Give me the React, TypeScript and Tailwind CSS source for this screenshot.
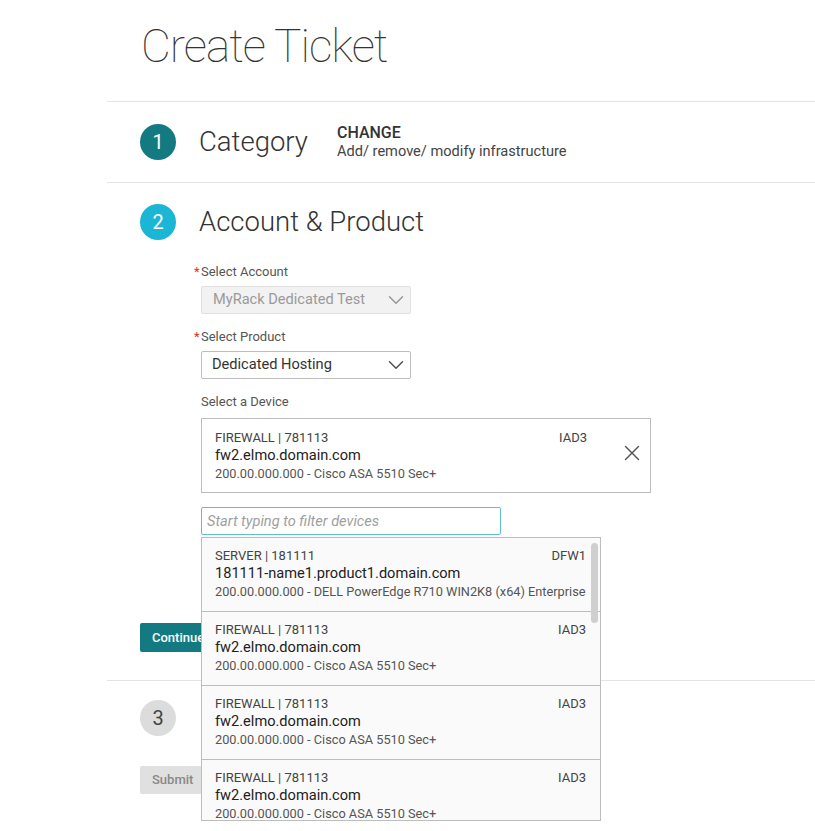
import { ChevronDown, X } from 'lucide-react'

interface Device {
  type: string
  id: string
  dc: string
  name: string
  detail: string
}

const devices: Device[] = [
  {
    type: 'SERVER',
    id: '181111',
    dc: 'DFW1',
    name: '181111-name1.product1.domain.com',
    detail: '200.00.000.000 - DELL PowerEdge R710 WIN2K8 (x64) Enterprise',
  },
  { type: 'FIREWALL', id: '781113', dc: 'IAD3', name: 'fw2.elmo.domain.com', detail: '200.00.000.000 - Cisco ASA 5510 Sec+' },
  { type: 'FIREWALL', id: '781113', dc: 'IAD3', name: 'fw2.elmo.domain.com', detail: '200.00.000.000 - Cisco ASA 5510 Sec+' },
  { type: 'FIREWALL', id: '781113', dc: 'IAD3', name: 'fw2.elmo.domain.com', detail: '200.00.000.000 - Cisco ASA 5510 Sec+' },
]

function DeviceInfo({ device }: { device: Device }) {
  return (
    <div>
      <div className="flex justify-between text-[13px] leading-4 text-[#444]">
        <span>
          {device.type} | {device.id}
        </span>
        <span>{device.dc}</span>
      </div>
      <div className="text-[14.6px] leading-[18px] text-[#222]">{device.name}</div>
      <div className="mt-0.5 text-[12.75px] leading-4 text-[#555]">{device.detail}</div>
    </div>
  )
}

function StepCircle({ n, className }: { n: number; className: string }) {
  return (
    <div className={`flex h-9 w-9 shrink-0 items-center justify-center rounded-full text-[20px] ${className}`}>
      {n}
    </div>
  )
}

function Label({ text, required }: { text: string; required?: boolean }) {
  return (
    <div className="relative text-[13px] leading-4 text-[#555]">
      {required && <span className="absolute -left-[7px] top-0 text-[#d9342b]">*</span>}
      {text}
    </div>
  )
}

export default function App() {
  return (
    <div className="min-h-[831px] bg-white font-['Roboto',sans-serif] text-[#333]">
      <div className="ml-[107px] pt-[22px]">
        <h1 className="pl-[34px] text-[46px] font-thin leading-[48px] tracking-[-1px] text-[#333]">Create Ticket</h1>

        {/* Step 1 */}
        <div className="mt-[31px] border-t border-[#e3e3e3] py-[22px] pl-[33px]">
          <div className="flex items-center">
            <StepCircle n={1} className="bg-[#127a80] text-white" />
            <div className="ml-[23px] text-[27.5px] font-light leading-9 text-[#333]">Category</div>
            <div className="ml-[29px]">
              <div className="text-[16px] font-medium leading-[18px] text-[#333]">CHANGE</div>
              <div className="text-[14.6px] leading-[18px] text-[#444]">Add/ remove/ modify infrastructure</div>
            </div>
          </div>
        </div>

        {/* Step 2 */}
        <div className="border-t border-[#e3e3e3] pb-[28px] pl-[33px] pt-[21px]">
          <div className="flex items-center">
            <StepCircle n={2} className="bg-[#1bb5d6] text-white" />
            <div className="ml-[23px] text-[27.5px] font-light leading-9 text-[#333]">Account &amp; Product</div>
          </div>

          <div className="ml-[61px] mt-[24px] w-[450px]">
            <Label text="Select Account" required />
            <div className="mt-[6px] flex h-7 w-[210px] items-center justify-between rounded-[2px] border border-[#e0e0e0] bg-[#f2f2f2] pl-[11px] pr-[1px] text-[14.6px] text-[#9a9a9a]">
              <span>MyRack Dedicated Test</span>
              <ChevronDown size={26} strokeWidth={1.4} className="text-[#999]" />
            </div>

            <div className="mt-[15px]">
              <Label text="Select Product" required />
            </div>
            <div className="mt-[6px] flex h-7 w-[210px] items-center justify-between rounded-[2px] border border-[#bdbdbd] bg-white pl-[10px] pr-[1px] text-[14.6px] text-[#333]">
              <span>Dedicated Hosting</span>
              <ChevronDown size={26} strokeWidth={1.4} className="text-[#555]" />
            </div>

            <div className="mt-[15px]">
              <Label text="Select a Device" />
            </div>
            <div className="mt-[8px] flex items-start border border-[#bdbdbd] bg-white pb-[10px] pl-[13px] pr-[5px] pt-[11px]">
              <div className="flex-1">
                <DeviceInfo device={devices[1]} />
              </div>
              <X size={26} strokeWidth={1.3} className="ml-[32px] mt-[10px] text-[#555]" />
            </div>

            <div className="relative mt-[14px] w-[300px]">
              <input
                placeholder="Start typing to filter devices"
                className="h-7 w-full rounded-[2px] border border-[#5fbfcf] px-[5px] text-[14.6px] italic text-[#333] outline-none placeholder:text-[#a0a0a0]"
              />
              <div className="absolute left-0 top-[30px] z-10 h-[284px] w-[400px] overflow-hidden border border-[#bdbdbd] bg-[#fafafa]">
                {devices.map((d, i) => (
                  <div key={i} className="h-[74px] border-b border-[#bdbdbd] pl-[13px] pr-[14px] pt-[10px]">
                    <DeviceInfo device={d} />
                  </div>
                ))}
                <div className="absolute right-[2px] top-[5px] h-[80px] w-[7px] rounded-full bg-[#cfcfcf]" />
              </div>
            </div>
          </div>

          <button className="mt-[88px] h-[29px] rounded-[2px] bg-[#127a80] px-3 text-[13px] font-medium text-white">
            Continue
          </button>
        </div>

        {/* Step 3 */}
        <div className="border-t border-[#e3e3e3] pl-[33px] pt-[19px]">
          <StepCircle n={3} className="bg-[#dcdcdc] text-[#444]" />
          <button className="mt-[30px] h-7 rounded-[2px] bg-[#e0e0e0] px-3 text-[13px] font-medium text-[#888]">
            Submit
          </button>
        </div>
      </div>
    </div>
  )
}
